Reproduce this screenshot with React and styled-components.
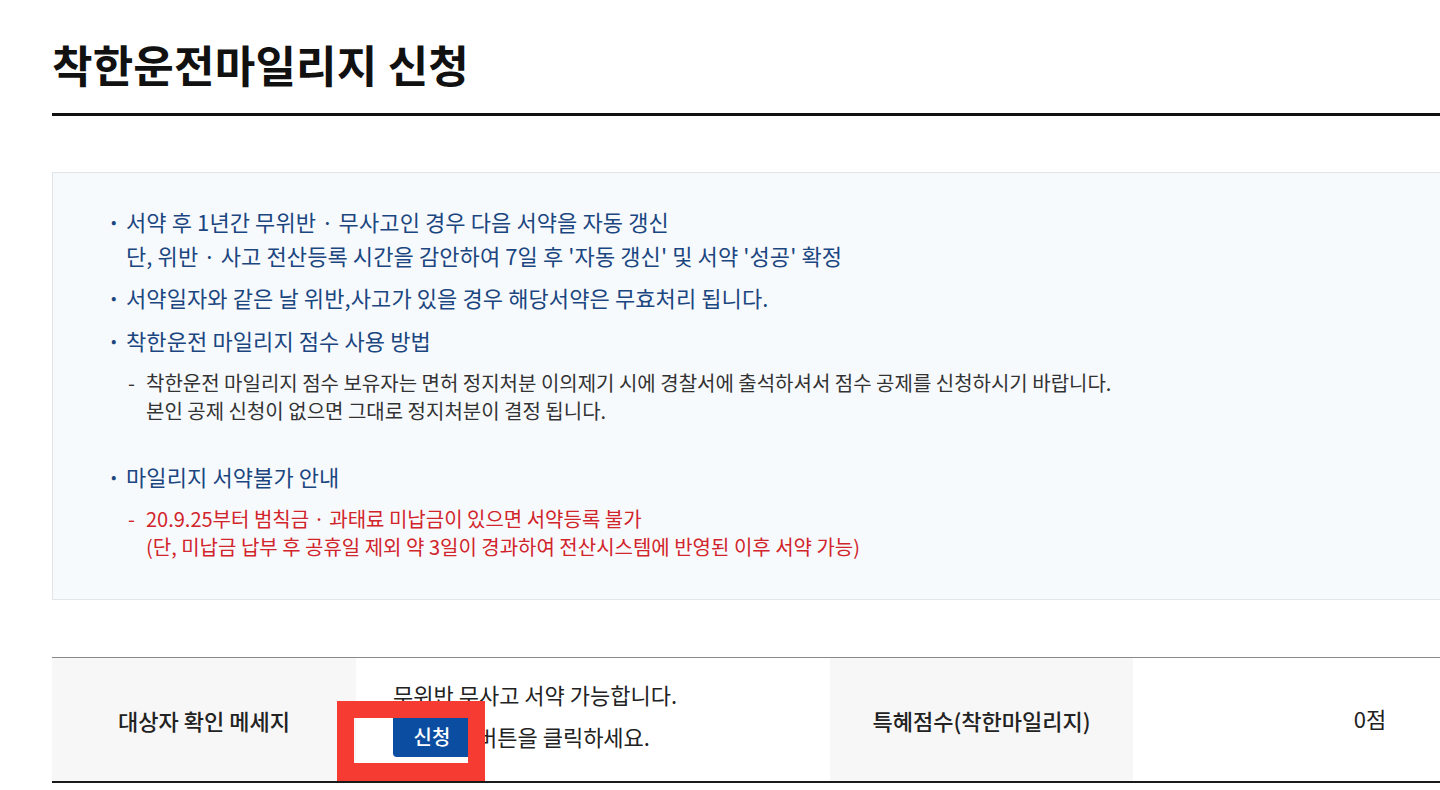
import React from "react";
import styled, { createGlobalStyle } from "styled-components";

const Global = createGlobalStyle`
  html, body { margin: 0; padding: 0; background: #fff; overflow: hidden; }
  body { font-family: "Noto Sans CJK KR", "Noto Sans", sans-serif; color: #222; }
`;

const Page = styled.div`
  width: 1555px;
  padding: 0 0 0 52px;
`;

const Title = styled.h2`
  margin: 0;
  padding-top: 34px;
  padding-bottom: 19px;
  font-size: 44px;
  line-height: 60px;
  font-weight: 700;
  letter-spacing: 0.2px;
  color: #111;
  border-bottom: 3px solid #111;
`;

const InfoBox = styled.div`
  margin-top: 56px;
  border: 1px solid #e3e5e8;
  background: #f7fafd;
  padding: 31px 0 30px 58px;
  height: 428px;
  box-sizing: border-box;
`;

const List = styled.ul`
  margin: 0;
  padding: 0;
  list-style: none;
`;

const Item = styled.li`
  position: relative;
  padding-left: 15px;
  font-size: 22px;
  line-height: 34px;
  color: #1b4680;
  letter-spacing: 0.1px;
  margin-top: ${(p) => p.$top || 0}px;
  &::before {
    content: "•";
    position: absolute;
    left: 0;
    top: 0;
    font-size: 16px;
  }
`;

const SubList = styled.div`
  margin-top: 12px;
  padding-left: 2px;
`;

const Sub = styled.p`
  margin: 0;
  position: relative;
  padding-left: 18px;
  font-size: 20px;
  line-height: 28px;
  letter-spacing: 0;
  color: ${(p) => (p.$red ? "#d1242b" : "#333")};
  &::before {
    content: ${(p) => (p.$dash ? '"-"' : '""')};
    position: absolute;
    left: 0;
    top: 0;
  }
`;

const Table = styled.div`
  margin-top: 57px;
  display: grid;
  grid-template-columns: 304px 474px 303px 474px;
  border-top: 1px solid #8a8a8a;
  border-bottom: 2px solid #1a1a1a;
  height: 126px;
  box-sizing: border-box;
`;

const Th = styled.div`
  background: #f7f7f7;
  display: flex;
  align-items: center;
  justify-content: center;
  font-size: 22px;
  font-weight: 500;
  color: #222;
`;

const Td = styled.div`
  position: relative;
  background: #fff;
  display: flex;
  flex-direction: column;
  justify-content: center;
  align-items: ${(p) => (p.$center ? "center" : "flex-start")};
  padding-left: ${(p) => (p.$center ? 0 : 37)}px;
  padding-bottom: ${(p) => (p.$center ? 4 : 9)}px;
  font-size: 22px;
  color: #222;
`;

const Line = styled.div`
  line-height: 42px;
  display: flex;
  align-items: center;
`;

const Button = styled.button`
  width: 78px;
  height: 42px;
  margin-right: 6px;
  border: 0;
  border-radius: 4px;
  background: #0b4da1;
  color: #fff;
  font-family: inherit;
  font-size: 20px;
  font-weight: 500;
  padding: 0;
`;

const Highlight = styled.div`
  position: absolute;
  left: -19px;
  top: 43px;
  width: 148px;
  height: 80px;
  box-sizing: border-box;
  border: 17px solid #f63b33;
  border-bottom-width: 18px;
  pointer-events: none;
`;

export default function App() {
  return (
    <>
      <Global />
      <Page>
        <Title>착한운전마일리지 신청</Title>
        <InfoBox>
          <List>
            <Item>
              서약 후 1년간 무위반 · 무사고인 경우 다음 서약을 자동 갱신
              <br />
              단, 위반 · 사고 전산등록 시간을 감안하여 7일 후 '자동 갱신' 및 서약 '성공' 확정
            </Item>
            <Item $top={8}>서약일자와 같은 날 위반,사고가 있을 경우 해당서약은 무효처리 됩니다.</Item>
            <Item $top={9}>
              착한운전 마일리지 점수 사용 방법
              <SubList>
                <Sub $dash>
                  착한운전 마일리지 점수 보유자는 면허 정지처분 이의제기 시에 경찰서에 출석하셔서 점수 공제를 신청하시기 바랍니다.
                </Sub>
                <Sub>본인 공제 신청이 없으면 그대로 정지처분이 결정 됩니다.</Sub>
              </SubList>
            </Item>
            <Item $top={34}>
              마일리지 서약불가 안내
              <SubList>
                <Sub $dash $red>
                  20.9.25부터 범칙금 · 과태료 미납금이 있으면 서약등록 불가
                </Sub>
                <Sub $red>(단, 미납금 납부 후 공휴일 제외 약 3일이 경과하여 전산시스템에 반영된 이후 서약 가능)</Sub>
              </SubList>
            </Item>
          </List>
        </InfoBox>
        <Table>
          <Th>대상자 확인 메세지</Th>
          <Td>
            <Line>무위반 무사고 서약 가능합니다.</Line>
            <Line>
              <Button>신청</Button>버튼을 클릭하세요.
            </Line>
            <Highlight />
          </Td>
          <Th>특혜점수(착한마일리지)</Th>
          <Td $center>0점</Td>
        </Table>
      </Page>
    </>
  );
}
